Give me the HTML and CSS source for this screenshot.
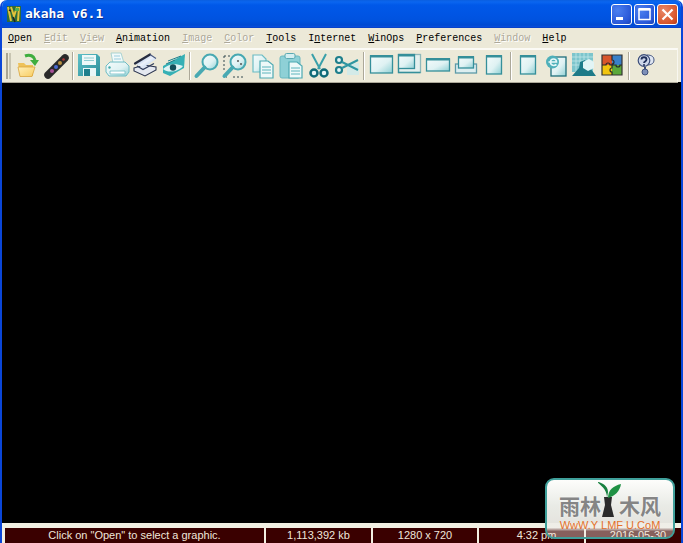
FILE: index.html
```html
<!DOCTYPE html>
<html lang="en">
<head>
<meta charset="utf-8">
<title>akaha v6.1</title>
<link rel="stylesheet" href="styles.css">
</head>
<body>
<div class="window">
  <header class="titlebar">
    <svg class="appicon" width="16" height="18" viewBox="0 0 16 18">
      <rect x="1" y="1" width="14" height="16" fill="#2f6b3a"/>
      <path d="M2 2l3 14M5 2l3 9 3-9M13 2l-1 14" stroke="#e2c23a" stroke-width="2" fill="none"/>
      <path d="M7 12l2 5M3 5l2 1" stroke="#222" stroke-width="1.500" fill="none"/>
      <path d="M9 3h4v3H9z" fill="#4fb04f"/>
    </svg>
    <span class="apptitle">akaha v6.1</span>
    <div class="winbuttons">
      <div class="wbtn"><svg width="21" height="21" viewBox="0 0 21 21"><rect x="5" y="13" width="7" height="3" fill="#fff"/></svg></div>
      <div class="wbtn"><svg width="21" height="21" viewBox="0 0 21 21"><rect x="5" y="5.500" width="11" height="10" fill="none" stroke="#fff" stroke-width="1.500"/><rect x="4.500" y="4" width="12" height="2.500" fill="#fff"/></svg></div>
      <div class="wbtn wclose"><svg width="21" height="21" viewBox="0 0 21 21"><path d="M5.500 5.500l10 10M15.500 5.500l-10 10" stroke="#fff" stroke-width="2.200"/></svg></div>
    </div>
  </header>

  <nav class="menubar">
    <span class="mi"><u>O</u>pen</span>
    <span class="mi off"><u>E</u>dit</span>
    <span class="mi off"><u>V</u>iew</span>
    <span class="mi"><u>A</u>nimation</span>
    <span class="mi off"><u>I</u>mage</span>
    <span class="mi off"><u>C</u>olor</span>
    <span class="mi"><u>T</u>ools</span>
    <span class="mi">I<u>n</u>ternet</span>
    <span class="mi"><u>W</u>inOps</span>
    <span class="mi"><u>P</u>references</span>
    <span class="mi off"><u>W</u>indow</span>
    <span class="mi"><u>H</u>elp</span>
  </nav>

  <div class="toolbar">
    <div class="grip"></div>
    <svg class="ic" viewBox="0 0 28 28">
      <defs>
        <linearGradient id="t" x1="0" y1="0" x2="1" y2="1"><stop offset="0" stop-color="#f4fbfb"/><stop offset=".55" stop-color="#dff2f3"/><stop offset="1" stop-color="#8fd0d4"/></linearGradient>
        <linearGradient id="f" x1="0" y1="0" x2="1" y2="1"><stop offset="0" stop-color="#fff0b8"/><stop offset="1" stop-color="#f8cc60"/></linearGradient>
        <linearGradient id="b" x1="0" y1="0" x2="1" y2="1"><stop offset="0" stop-color="#5fc0c8"/><stop offset="1" stop-color="#2c8f9a"/></linearGradient>
        <linearGradient id="g" x1="0" y1="0" x2="1" y2="1"><stop offset="0" stop-color="#6f94d0"/><stop offset=".5" stop-color="#eef3fb"/><stop offset="1" stop-color="#9dbce6"/></linearGradient>
      </defs>
      <path d="M4 11h6l2 2h7v11H6z" fill="#eec25a"/>
      <path d="M4 15h17l-3 9.500H6z" fill="url(#f)" stroke="#d9a53c" stroke-width=".8"/>
      <path d="M11 4c5-2 9 0 10 4" fill="none" stroke="#3fae3f" stroke-width="3"/>
      <path d="M16 8h9l-4 6z" fill="#3fae3f"/>
    </svg>
    <svg class="ic" viewBox="0 0 28 28">
      <path d="M6 23L23 6" stroke="#2a2a2a" stroke-width="7.500" stroke-linecap="round"/>
      <circle cx="10" cy="19" r="2" fill="#a8509a"/><circle cx="14" cy="15" r="2" fill="#4a6ad0"/><circle cx="18" cy="11" r="2" fill="#b89040"/><circle cx="21.500" cy="7.500" r="1.300" fill="#b03a3a"/>
    </svg>
    <div class="sep narrow"></div>
    <svg class="ic" viewBox="0 0 28 28">
      <path d="M3 2h19l3 3v19H3z" fill="url(#b)"/>
      <rect x="7" y="3" width="14" height="10" fill="#eef8f8"/>
      <path d="M9 6h10M9 8.500h10" stroke="#8fcdd2"/>
      <path d="M8 24v-8h13v8z" fill="#eaf6f7"/><rect x="9" y="17" width="6" height="7" fill="#1f7f8c"/>
    </svg>
    <svg class="ic" viewBox="0 0 28 28">
      <path d="M8 1l10 0 3 10H10z" fill="#f2fafa" stroke="#9cc" stroke-width=".8"/>
      <path d="M11 4h6M11 7h7" stroke="#9cd"/>
      <path d="M3 14l4-4h15l4 4v6l-3 4H6l-3-4z" fill="url(#t)" stroke="#6fbcc4"/>
      <path d="M7 19h15v3H7z" fill="#fff" stroke="#6fbcc4" stroke-width=".8"/>
      <circle cx="6.500" cy="15.500" r="1.200" fill="#4aa"/>
    </svg>
    <svg class="ic" viewBox="0 0 28 28">
      <path d="M3 16l10-3 12 2v3l-11 6-11-5z" fill="#e4e8f0" stroke="#2c3550" stroke-width="1.100"/>
      <path d="M5 12L19 3l6 4-13 9z" fill="url(#g)"/>
      <path d="M4 11.500L19 2.500" stroke="#262c40" stroke-width="2.200" stroke-linecap="round"/>
      <path d="M19 2.500l6 4" stroke="#4a5a80" stroke-width="1.200"/>
      <path d="M6 14l6 3.500 11-6" fill="none" stroke="#33405f" stroke-width="1.400"/>
    </svg>
    <svg class="ic" viewBox="0 0 28 28">
      <path d="M4 14L26 2l-1 14-14 8-7-3z" fill="#35b0b5"/>
      <path d="M4 17c5-5 12-6 20-3-4 5-14 8-20 3z" fill="#dff4f5"/>
      <circle cx="14" cy="15.500" r="3.200" fill="#134e5a"/>
      <path d="M9 9l13-5M7 12l9-4" stroke="#1f7f8c"/>
    </svg>
    <div class="sep"></div>
    <svg class="ic" viewBox="0 0 28 28">
      <circle cx="17" cy="10" r="7.500" fill="url(#t)" stroke="#48a9b2" stroke-width="2"/>
      <path d="M11.500 15.500L3.500 24" stroke="#48a9b2" stroke-width="4" stroke-linecap="round"/>
    </svg>
    <svg class="ic" viewBox="0 0 28 28">
      <path d="M3 4h7M3 4v14M3 23v2h3M12 25h10" stroke="#33494f" stroke-dasharray="2 2" fill="none"/>
      <circle cx="17" cy="10" r="7.500" fill="url(#t)" stroke="#48a9b2" stroke-width="2"/>
      <circle cx="17" cy="9" r="1" fill="#555"/><circle cx="20" cy="12" r="1" fill="#555"/>
      <path d="M11.500 15.500L3.500 24" stroke="#48a9b2" stroke-width="4" stroke-linecap="round"/>
    </svg>
    <svg class="ic" viewBox="0 0 28 28">
      <path d="M4 3h9l4 4v13H4z" fill="url(#t)" stroke="#6bbcc4" stroke-width="1.200"/>
      <path d="M11 9h8l5 4v13H11z" fill="#eef9f9" stroke="#4ea9b2" stroke-width="1.200"/>
      <path d="M13 15h9M13 18h9M13 21h9" stroke="#5db4bc"/>
    </svg>
    <svg class="ic" viewBox="0 0 28 28">
      <rect x="3" y="4" width="20" height="22" rx="2" fill="#8ed0d6" stroke="#6bb8c0"/>
      <rect x="8" y="1.500" width="10" height="5" rx="1.500" fill="#d5eef0" stroke="#5aa9b2"/>
      <path d="M12 10h8l5 4v12H12z" fill="#eef9f9" stroke="#4ea9b2" stroke-width="1.200"/>
      <path d="M14 16h9M14 19h9M14 22h9" stroke="#5db4bc"/>
    </svg>
    <svg class="ic" viewBox="0 0 28 28">
      <path d="M7 2l8 15M21 2l-8 15" stroke="#3aa0aa" stroke-width="2"/>
      <circle cx="9" cy="21" r="3.500" fill="#e8f6f7" stroke="#0f6a78" stroke-width="2.500"/>
      <circle cx="19" cy="21" r="3.500" fill="#e8f6f7" stroke="#0f6a78" stroke-width="2.500"/>
    </svg>
    <svg class="ic" viewBox="0 0 28 28">
      <path d="M14 14l5-3 7 0v12H14z" fill="#cdeaec" opacity=".8"/>
      <circle cx="6" cy="8" r="3" fill="#e8f6f7" stroke="#1f7f8c" stroke-width="2.200"/>
      <circle cx="6" cy="18" r="3" fill="#e8f6f7" stroke="#1f7f8c" stroke-width="2.200"/>
      <path d="M9 10l16 8M9 16L25 8" stroke="#2f96a2" stroke-width="2"/>
    </svg>
    <div class="sep wide"></div>
    <svg class="ic" viewBox="0 0 28 28">
      <rect x="2.500" y="4" width="22" height="17" fill="url(#t)" stroke="#358f9a" stroke-width="1.300"/><rect x="2" y="3" width="23" height="2.500" fill="#358f9a"/>
    </svg>
    <svg class="ic" viewBox="0 0 28 28">
      <rect x="2.500" y="2.500" width="22" height="18" fill="#e4f0ee" stroke="#8fb8bb" stroke-width="1.300"/>
      <rect x="2.500" y="2.500" width="16" height="14" fill="url(#t)" stroke="#358f9a" stroke-width="1.300"/><rect x="2" y="2" width="17" height="2.500" fill="#358f9a"/>
      <path d="M2.500 16.500v4h22" fill="none" stroke="#358f9a" stroke-width="1.300"/>
    </svg>
    <svg class="ic" viewBox="0 0 28 28">
      <rect x="2.500" y="7" width="23" height="12" fill="url(#t)" stroke="#358f9a" stroke-width="1.300"/><rect x="2" y="6" width="24" height="2.500" fill="#358f9a"/>
    </svg>
    <svg class="ic" viewBox="0 0 28 28">
      <rect x="3.500" y="12" width="21" height="9" fill="#dceef0" stroke="#5d9aa8" stroke-width="1.300"/>
      <rect x="6.500" y="5" width="15" height="11" fill="url(#t)" stroke="#358f9a" stroke-width="1.300"/><rect x="6" y="4" width="16" height="2.500" fill="#358f9a"/>
    </svg>
    <svg class="ic" viewBox="0 0 28 28">
      <rect x="6.500" y="4" width="15" height="18" fill="url(#t)" stroke="#358f9a" stroke-width="1.300"/><rect x="6" y="3" width="16" height="2.500" fill="#358f9a"/>
    </svg>
    <div class="sep"></div>
    <svg class="ic" viewBox="0 0 28 28">
      <rect x="6.500" y="4" width="15" height="18" fill="url(#t)" stroke="#358f9a" stroke-width="1.300"/><rect x="6" y="3" width="16" height="2.500" fill="#358f9a"/>
    </svg>
    <svg class="ic" viewBox="0 0 28 28">
      <rect x="9" y="5" width="15" height="19" fill="url(#t)" stroke="#1f6f7c" stroke-width="1.300"/>
      <circle cx="10.500" cy="10" r="6.500" fill="#4fb0ba"/>
      <path d="M6.500 10h8c0-4-6-4-6 0 0 4 4 4 6 2.500" fill="none" stroke="#e6f7f8" stroke-width="1.600"/>
    </svg>
    <svg class="ic" viewBox="0 0 28 28">
      <rect x="2" y="1" width="21" height="19" fill="#7cc5cc"/>
      <path d="M2 5h21M2 9h21M2 13h21M6 1v19M10 1v19M14 1v19M18 1v19" stroke="#bfe6e8" stroke-width=".8"/>
      <path d="M2 24l7-8 1-6 5-2 3 5 8 11z" fill="#1d7a88"/>
      <path d="M13 10l6-3 5 3v6l-6 3-5-3z" fill="#e2f4f5"/>
    </svg>
    <svg class="ic" viewBox="0 0 28 28">
      <rect x="4" y="3" width="10" height="10" fill="#d8552b"/><rect x="14" y="3" width="10" height="10" fill="#3a80c8"/>
      <rect x="4" y="13" width="10" height="10" fill="#f1c40f"/><rect x="14" y="13" width="10" height="10" fill="#5aa83a"/>
      <path d="M4 3h20v20H4z" fill="none" stroke="#333" stroke-width="1.200"/>
      <path d="M14 3v5a2 2 0 0 1 0 4v4a2 2 0 0 0 0 4v3M4 13h4a2 2 0 0 1 4 0h6a2 2 0 0 0 4 0h2" fill="none" stroke="#2a2a2a" stroke-width="1.200"/>
    </svg>
    <div class="sep"></div>
    <svg class="ic" viewBox="0 0 28 28">
      <path d="M15 3c5 0 7 2 7 5s-2 5-7 5z" fill="#dfe6f2" stroke="#43557f"/>
      <circle cx="12" cy="8.500" r="5.800" fill="#cdd7ea" stroke="#3d4f7a" stroke-width="1.200"/>
      <path d="M9.500 7.500c0-3 5-3 5 0 0 2-2.500 2-2.500 3.500" fill="none" stroke="#1f2f5a" stroke-width="1.800"/>
      <circle cx="12" cy="13" r="1" fill="#1f2f5a"/>
      <path d="M13 15v3" stroke="#3d4f7a" stroke-width="2"/>
      <circle cx="13" cy="20" r="3" fill="#7d8fb8" stroke="#3d4f7a"/>
    </svg>
  </div>

  <main class="canvas"></main>

  <footer class="statusbar">
    <div class="cell c1">Click on "Open" to select a graphic.</div>
    <div class="cell c2">1,113,392 kb</div>
    <div class="cell c3">1280 x 720</div>
    <div class="cell c4">4:32 pm</div>
    <div class="cell c5">2016-05-30</div>
  </footer>
</div>

<aside class="mark">
  <div class="mark-row">
    <span class="mark-cn">雨林</span>
    <svg class="tree" width="24" height="40" viewBox="0 0 24 40">
      <path d="M6 17h8l-1 8 3 12H4l3-12z" fill="#2b2b2b"/>
      <path d="M9 18C9 11 5 7-1 2c3 0 11 3 11 10z" fill="#17803f"/>
      <path d="M10 18c0-8 5-12 13-14-1 7-6 12-13 14z" fill="#1f9144"/>
    </svg>
    <span class="mark-cn">木风</span>
  </div>
  <div class="mark-url">WwW.Y LMF U.CoM</div>
</aside>
</body>
</html>
```

FILE: styles.css
```css
html, body {
  margin: 0;
  padding: 0;
  height: 100%;
  background: #fff;
  overflow: hidden;
}

.window {
  width: 683px;
  height: 543px;
  box-sizing: border-box;
  display: flex;
  flex-direction: column;
  overflow: hidden;
  border-radius: 7px 7px 0 0;
  border-left: 2px solid #0a46d8;
  border-right: 2px solid #0a46d8;
  background: #ece9d8;
}

.titlebar {
  height: 28px;
  margin: 0 -2px;
  padding: 0 5px 0 6px;
  display: flex;
  align-items: center;
  flex: none;
  background: linear-gradient(#0a5fe0 0, #0a66f0 2px, #0058e8 5px, #0055e4 14px, #0052de 21px, #004ad2 25px, #0a4edc 27px, #0838b8 28px);
}

.appicon {
  flex: none;
  margin-top: -1px;
}

.apptitle {
  margin-left: 3px;
  font: bold 13px/16px "DejaVu Sans Mono", monospace;
  color: #fff;
  text-shadow: 1px 1px 0 #0b2f90;
  white-space: pre;
}

.winbuttons {
  margin-left: auto;
  display: flex;
  gap: 2px;
}

.wbtn {
  width: 21px;
  height: 21px;
  box-sizing: border-box;
  border: 1px solid #fff;
  border-radius: 3px;
  background: radial-gradient(circle at 30% 30%, #4c80f0, #2a58d8 70%, #1c44b8);
  display: flex;
  align-items: center;
  justify-content: center;
}

.wbtn svg {
  flex: none;
}

.wclose {
  background: radial-gradient(circle at 30% 30%, #e88868, #d8552b 70%, #b83a18);
}

.menubar {
  height: 20px;
  flex: none;
  box-sizing: border-box;
  padding: 2px 0 0 6px;
  display: flex;
  gap: 12px;
  align-items: center;
  font: 10px/14px "Liberation Mono", monospace;
  color: #000;
  background: #ece9d8;
  white-space: nowrap;
}

.mi.off {
  color: #aca899;
  text-shadow: 1px 1px 0 #fff;
}

.toolbar {
  height: 34px;
  flex: none;
  box-sizing: border-box;
  margin-right: 3px;
  padding-left: 12px;
  display: flex;
  align-items: center;
  border-top: 2px solid #fbfaf5;
  border-right: 1px solid #f8f7f0;
  background: #ece9d8;
  box-shadow: 0 1px 0 #aca899;
  position: relative;
}

.grip {
  position: absolute;
  left: 4px;
  top: 3px;
  bottom: 3px;
  width: 1px;
  border-left: 2px solid #a8a593;
  border-right: 2px solid #c8c5b2;
}

.ic {
  width: 28px;
  height: 28px;
  flex: none;
}

.sep {
  width: 6px;
  height: 28px;
  flex: none;
  position: relative;
}

.sep::after {
  content: "";
  position: absolute;
  left: 2px;
  top: 0;
  bottom: 0;
  width: 1px;
  background: #aca899;
  box-shadow: 1px 0 0 #fff;
}

.sep.narrow {
  width: 5px;
}

.sep.wide {
  width: 7px;
}

.canvas {
  flex: 1;
  background: #000;
}

.statusbar {
  height: 20px;
  flex: none;
  box-sizing: border-box;
  padding: 5px 0 0 3px;
  display: flex;
  background: #f1efe2;
  font: 11px/15px "Liberation Sans", Arial, sans-serif;
  color: #f0e6da;
}

.cell {
  height: 15px;
  flex: none;
  box-sizing: border-box;
  margin-right: 2px;
  background: #3a0000;
  text-align: center;
  white-space: nowrap;
  overflow: hidden;
}

.c1 { width: 259px; }
.c2 { width: 105px; }
.c3 { width: 104px; }
.c4 { width: 105px; padding-left: 10px; }
.c5 { width: 96px; margin-right: 0; padding-left: 8px; }

.mark {
  position: absolute;
  left: 545px;
  top: 478px;
  width: 130px;
  height: 61px;
  box-sizing: border-box;
  padding-top: 3px;
  border: 2px solid #3f9f9a;
  border-radius: 9px;
  background: linear-gradient(#fdfdfb 0, #e9ebe6 45%, rgba(240, 238, 232, .95) 84%, rgba(248, 240, 232, .4) 90%);
  display: flex;
  flex-direction: column;
  align-items: center;
}

.mark-row {
  height: 36px;
  display: flex;
  align-items: flex-end;
}

.tree {
  flex: none;
  margin: 0 -3px -1px;
}

.mark-cn {
  font: bold 21px/24px "Noto Sans CJK SC", sans-serif;
  color: #858585;
  text-shadow: 0 0 2px #fff;
  margin-bottom: 2px;
}

.mark-url {
  margin-top: 1px;
  font: 11px/11px "Liberation Sans", Arial, sans-serif;
  color: #e4702a;
  white-space: nowrap;
}
```
